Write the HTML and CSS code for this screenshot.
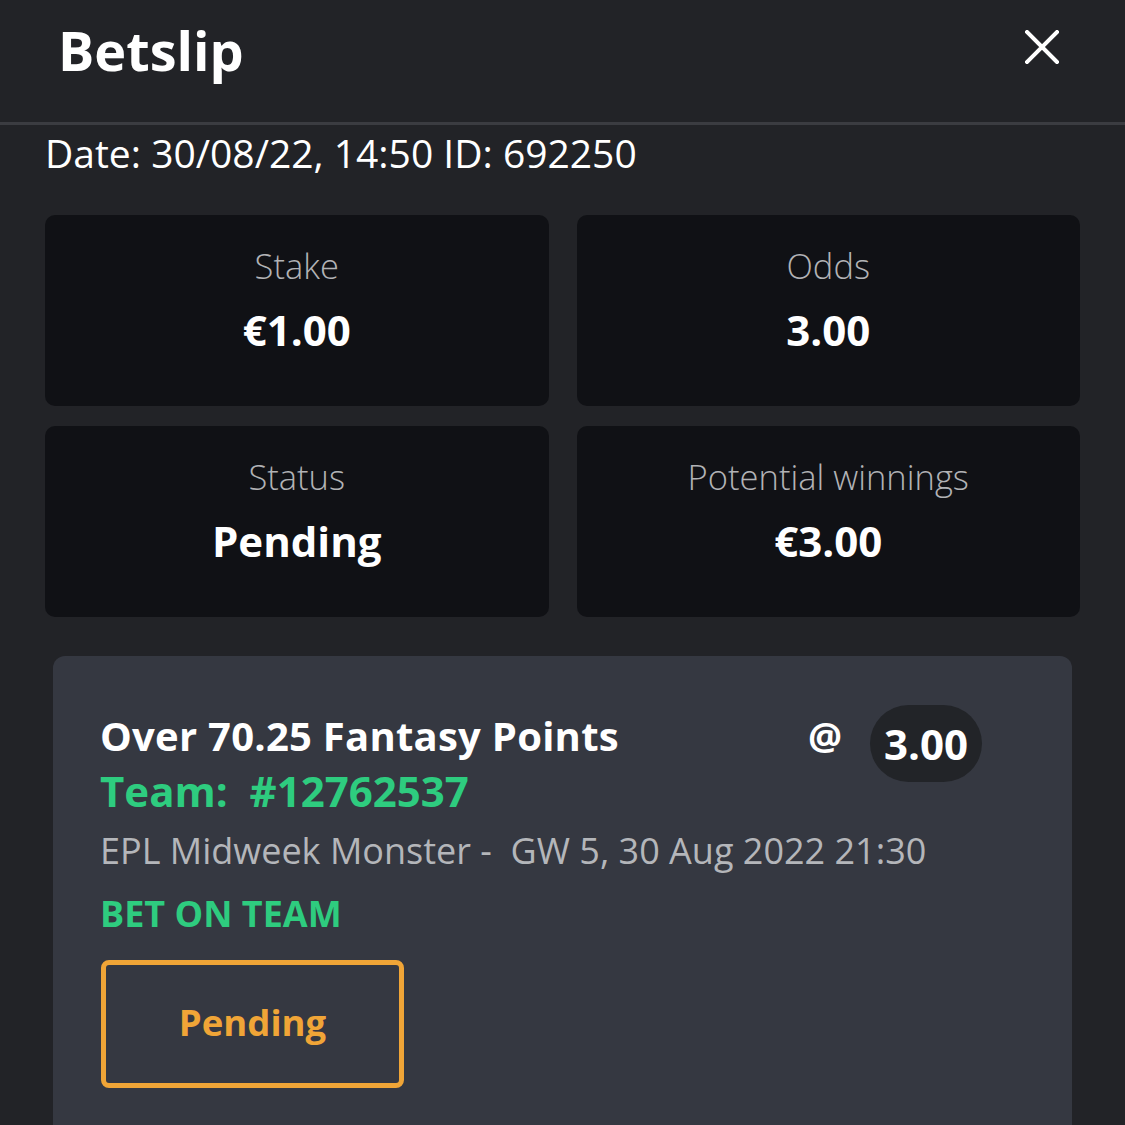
FILE: index.html
```html
<!DOCTYPE html>
<html>
<head>
<meta charset="utf-8">
<link rel="stylesheet" href="styles.css">
</head>
<body>
<div class="page">
  <header class="header">
    <h1 class="title">Betslip</h1>
    <svg class="close" width="34" height="34" viewBox="0 0 34 34"><path d="M2 2 L32 32 M32 2 L2 32" stroke="#fff" stroke-width="4" stroke-linecap="square"/></svg>
  </header>
  <div class="meta">Date: 30/08/22, 14:50 ID: 692250</div>
  <div class="grid">
    <div class="stat"><div class="label">Stake</div><div class="value">€1.00</div></div>
    <div class="stat"><div class="label">Odds</div><div class="value">3.00</div></div>
    <div class="stat"><div class="label">Status</div><div class="value">Pending</div></div>
    <div class="stat"><div class="label">Potential winnings</div><div class="value">€3.00</div></div>
  </div>
  <div class="bet">
    <div class="bet-top">
      <div class="bet-info">
        <div class="bet-title">Over 70.25 Fantasy Points</div>
        <div class="team">Team:&nbsp; #12762537</div>
      </div>
      <div class="odds"><span class="at">@</span><span class="pill">3.00</span></div>
    </div>
    <div class="event">EPL Midweek Monster -&nbsp; GW 5, 30 Aug 2022 21:30</div>
    <div class="bet-type">BET ON TEAM</div>
    <div class="status-btn">Pending</div>
  </div>
</div>
</body>
</html>
```
FILE: styles.css
```css
html, body { margin: 0; padding: 0; }
body {
  background: #222327;
  font-family: "Open Sans", "Noto Sans", sans-serif;
  color: #fff;
  width: 1125px;
  height: 1125px;
  overflow: hidden;
}
.header {
  height: 125px;
  border-bottom: 3px solid #3b3c41;
  display: flex;
  justify-content: space-between;
  align-items: flex-start;
  padding: 0 66px 0 58px;
  box-sizing: border-box;
}
.title {
  margin: 15px 0 0 0;
  font-size: 54px;
  font-weight: 700;
  line-height: 70px;
}
.close { margin-top: 30px; }
.meta {
  padding: 0 0 0 45px;
  font-size: 39px;
  line-height: 56px;
  color: #fff;
}
.grid {
  margin: 34px 45px 0 45px;
  display: grid;
  grid-template-columns: 1fr 1fr;
  column-gap: 28px;
  row-gap: 20px;
}
.stat {
  background: #101115;
  border-radius: 10px;
  height: 191px;
  display: flex;
  flex-direction: column;
  align-items: center;
  padding-top: 28px;
  box-sizing: border-box;
}
.label {
  font-size: 34.5px;
  font-weight: 300;
  color: #b2b3b6;
  line-height: 46px;
}
.value {
  font-size: 42px;
  font-weight: 700;
  line-height: 56px;
  margin-top: 13px;
}
.bet {
  margin: 39px 53px 0 53px;
  background: #353841;
  border-radius: 12px;
  padding: 46px 47px 60px 47px;
  height: 600px;
  box-sizing: border-box;
}
.bet-top {
  display: flex;
  justify-content: space-between;
  align-items: flex-start;
}
.bet-title {
  font-size: 40px;
  font-weight: 700;
  letter-spacing: 0.25px;
  line-height: 56px;
  margin-top: 6px;
}
.team {
  font-size: 42px;
  font-weight: 700;
  color: #2ecc7f;
  line-height: 56px;
  margin-top: -1px;
}
.odds {
  display: flex;
  align-items: center;
  gap: 28px;
  margin-right: 43px;
  margin-top: 3px;
}
.at { font-size: 38px; font-weight: 700; margin-bottom: 18px; }
.pill {
  background: #222428;
  border-radius: 40px;
  height: 77px;
  padding: 0 14px;
  display: flex;
  align-items: center;
  font-size: 42px;
  font-weight: 700;
}
.event {
  font-size: 36px;
  color: #b4b6ba;
  line-height: 56px;
  margin-top: 4px;
}
.bet-type {
  font-size: 36px;
  font-weight: 700;
  color: #2ecc7f;
  line-height: 50px;
  margin-top: 10px;
}
.status-btn {
  margin-top: 21px;
  margin-left: 1px;
  width: 303px;
  height: 128px;
  box-sizing: border-box;
  border: 5px solid #f0a537;
  border-radius: 8px;
  display: flex;
  align-items: center;
  justify-content: center;
  color: #f0a537;
  font-size: 36.5px;
  font-weight: 700;
  padding-bottom: 4px;
}
```
